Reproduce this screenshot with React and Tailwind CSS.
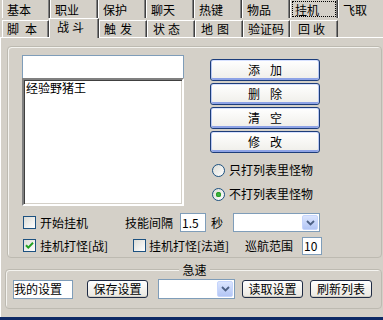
import { Fragment } from "react";

const row1Tabs = [
  { label: "基本", w: "w-[48px]" },
  { label: "职业", w: "w-[48px]" },
  { label: "保护", w: "w-[48px]" },
  { label: "聊天", w: "w-[48px]" },
  { label: "热键", w: "w-[48px]" },
  { label: "物品", w: "w-[48px]" },
  { label: "挂机", w: "w-[48px]", focus: true },
  { label: "飞取", w: "w-[45px]", last: true },
];

const row2Tabs = [
  { label: "脚本", w: "w-[47px]", pl: "pl-[4px]", track: "tracking-[6px]" },
  { label: "战斗", w: "w-[50px]", pl: "pl-[7px]", track: "tracking-[3px]", selected: true },
  { label: "触发", w: "w-[48px]", pl: "pl-[4px]", track: "tracking-[4px]" },
  { label: "状态", w: "w-[48px]", pl: "pl-[5px]", track: "tracking-[3px]" },
  { label: "地图", w: "w-[48px]", pl: "pl-[5px]", track: "tracking-[4px]" },
  { label: "验证码", w: "w-[47px]", pl: "pl-[4px]", track: "" },
  { label: "回收", w: "w-[48px]", pl: "pl-[7px]", track: "tracking-[3px]" },
];

const groupBorder =
  "border border-[#bdbab1] rounded-[4px] shadow-[inset_1px_1px_0_#f4f3ef]";

function Chevron() {
  return (
    <svg width="9" height="6" viewBox="0 0 9 6">
      <path d="M1 1l3.5 3.5L8 1" stroke="#4d6185" strokeWidth="1.8" fill="none" />
    </svg>
  );
}

function Combo({ className }) {
  return (
    <div className={`flex border border-[#7f9db9] bg-white ${className}`}>
      <div className="flex-1" />
      <div className="w-[16px] m-[1px] rounded-[2px] border border-[#c6d5fc] bg-gradient-to-b from-[#dbe5fe] to-[#b3c6f5] flex items-center justify-center">
        <Chevron />
      </div>
    </div>
  );
}

function BlueButton({ a, b }) {
  return (
    <div className="w-[110px] h-[22px] rounded-[3px] border border-[#1d3d7a] bg-gradient-to-b from-white to-[#efeee9] shadow-[inset_1px_0_0_#b9c8f2,inset_-1px_0_0_#b9c8f2,inset_0_-2px_0_#8ea3e6,inset_0_1px_0_#d7e1ff] flex items-center justify-center gap-[10px]">
      <span>{a}</span>
      <span>{b}</span>
    </div>
  );
}

function DarkButton({ children, className }) {
  return (
    <div
      className={`h-[18px] rounded-[3px] border border-[#1f2b44] bg-gradient-to-b from-white to-[#e9e7e0] shadow-[inset_0_-1px_0_#d2cec4] flex items-center justify-center ${className}`}
    >
      {children}
    </div>
  );
}

function CheckBox({ checked }) {
  return (
    <div className="w-[13px] h-[13px] shrink-0 border border-[#1c5180] bg-gradient-to-br from-[#dcdcd6] to-white flex items-center justify-center">
      {checked ? (
        <svg width="9" height="9" viewBox="0 0 9 9">
          <path d="M1 4.2l2.3 2.4L8 1.8" stroke="#21a121" strokeWidth="2" fill="none" />
        </svg>
      ) : null}
    </div>
  );
}

function Radio({ checked }) {
  return (
    <div className="w-[13px] h-[13px] shrink-0 rounded-full border border-[#1c5180] bg-gradient-to-br from-[#dcdcd6] to-white flex items-center justify-center">
      {checked ? (
        <div className="w-[5px] h-[5px] rounded-full bg-[#3fb53f] shadow-[inset_0_0_0_1px_#2a9a2a]" />
      ) : null}
    </div>
  );
}

export default function App() {
  return (
    <div className="w-[383px] h-[320px] overflow-hidden bg-[#d4d0c8] text-black text-[12px] leading-[14px] font-['Noto_Sans_CJK_SC',sans-serif]">
      {/* top tab row */}
      <div className="flex pl-[2px] h-[18px]">
        {row1Tabs.map((t) => (
          <div
            key={t.label}
            className={`relative shrink-0 h-[18px] flex items-center pl-[4px] pt-[1px] border-l border-white ${t.w} ${
              t.last ? "" : "border-r border-r-[#404040] shadow-[inset_-1px_0_0_#808080]"
            }`}
          >
            {t.label}
            {t.focus ? (
              <div className="absolute left-[1px] right-[1px] top-[1px] bottom-[1px] border border-dotted border-black" />
            ) : null}
          </div>
        ))}
      </div>

      {/* second tab row */}
      <div className="flex items-end pl-[2px] h-[19px]">
        {row2Tabs.map((t) => (
          <div
            key={t.label}
            className={`relative shrink-0 flex items-start border-l border-t border-white border-r border-r-[#404040] shadow-[inset_-1px_0_0_#808080] ${t.w} ${t.pl} ${
              t.selected ? "h-[20px] -mb-[1px] z-10 bg-[#d4d0c8] pt-[1px]" : "h-[17px] pt-[1px]"
            }`}
          >
            <span className={t.track}>{t.label}</span>
          </div>
        ))}
      </div>

      {/* tab panel */}
      <div className="h-[280px] border-t border-l border-white">
        <div className={`ml-[6px] mt-[8px] w-[375px] h-[212px] ${groupBorder}`}>
          <div className="flex">
            <div className="ml-[14px] mt-[8px] w-[162px]">
              <div className="h-[23px] border border-[#7f9db9] border-b-0 bg-white" />
              <div className="h-[128px] border-2 border-t-[#808080] border-l-[#808080] border-r-white border-b-white bg-white shadow-[inset_1px_1px_0_#404040,inset_-1px_-1px_0_#d4d0c8] pl-[2px] pt-[1px]">
                经验野猪王
              </div>
            </div>
            <div className="ml-[26px] mt-[12px] flex flex-col">
              <div className="flex flex-col gap-[2px]">
                <BlueButton a="添" b="加" />
                <BlueButton a="删" b="除" />
                <BlueButton a="清" b="空" />
                <BlueButton a="修" b="改" />
              </div>
              <div className="mt-[10px] h-[14px] flex items-center pl-[2px] gap-[4px]">
                <Radio />
                <span>只打列表里怪物</span>
              </div>
              <div className="mt-[10px] h-[14px] flex items-center pl-[2px] gap-[4px]">
                <Radio checked />
                <span>不打列表里怪物</span>
              </div>
            </div>
          </div>

          <div className="mt-[7px] h-[19px] flex items-center pl-[15px]">
            <div className="w-[102px] flex items-center gap-[4px]">
              <CheckBox />
              <span>开始挂机</span>
            </div>
            <span className="w-[55px]">技能间隔</span>
            <div className="w-[26px] h-[19px] border border-[#7f9db9] bg-white pl-[1px] flex items-center">1.5</div>
            <span className="ml-[5px]">秒</span>
            <Combo className="ml-[10px] w-[87px] h-[19px]" />
          </div>

          <div className="mt-[4px] h-[19px] flex items-center pl-[15px]">
            <div className="w-[110px] flex items-center gap-[4px]">
              <CheckBox checked />
              <span>挂机打怪[战]</span>
            </div>
            <div className="w-[112px] flex items-center gap-[3px]">
              <CheckBox />
              <span>挂机打怪[法道]</span>
            </div>
            <span>巡航范围</span>
            <div className="ml-[9px] w-[20px] h-[18px] border border-[#7f9db9] bg-white pl-[1px] flex items-center">10</div>
          </div>
        </div>

        <div className={`ml-[4px] mt-[11px] w-[377px] h-[40px] ${groupBorder}`}>
          <div className="-mt-[7px] h-[13px] flex justify-center">
            <span className="bg-[#d4d0c8] px-[3px] ml-[2px]">急速</span>
          </div>
          <div className="mt-[3px] h-[20px] flex items-center pl-[7px]">
            <div className="w-[60px] h-[19px] border border-[#7f9db9] bg-white flex items-center">我的设置</div>
            <DarkButton className="ml-[14px] w-[61px]">保存设置</DarkButton>
            <Combo className="ml-[10px] w-[77px] h-[20px]" />
            <DarkButton className="ml-[7px] w-[61px]">读取设置</DarkButton>
            <DarkButton className="ml-[7px] w-[62px]">刷新列表</DarkButton>
          </div>
        </div>
      </div>
      <div className="h-[3px] bg-[#0e2a66]" />
    </div>
  );
}
